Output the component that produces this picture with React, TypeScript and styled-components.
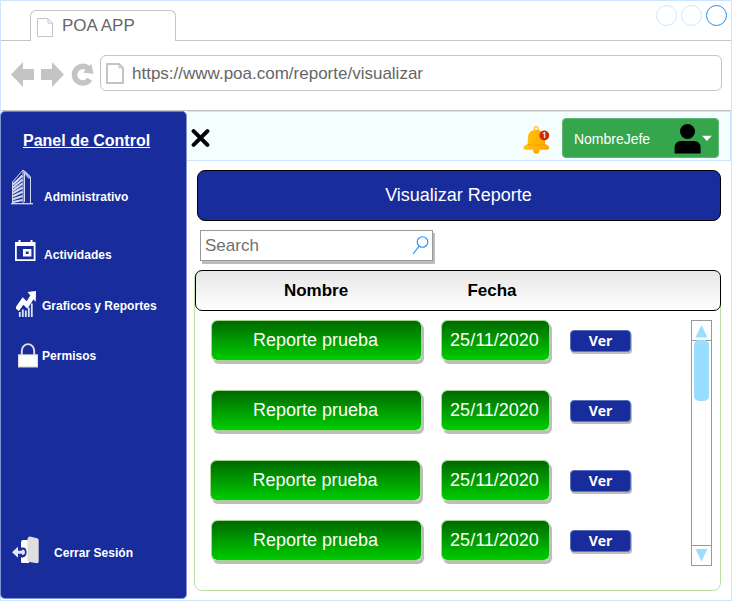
import React from 'react';
import styled, { createGlobalStyle } from 'styled-components';

const GlobalStyle = createGlobalStyle`
  * { box-sizing: border-box; }
  body { margin: 0; background: #fff; font-family: "Liberation Sans", Arial, sans-serif; }
  svg { display: block; flex: none; }
  button { font-family: inherit; margin: 0; }
`;

const navy = '#182c9b';
const paleBlue = '#cce5ff';
const line = '#c4c4c4';

const BrowserWindow = styled.div`
  width: 732px;
  height: 601px;
  border: 1px solid ${paleBlue};
  display: flex;
  flex-direction: column;
  background: #fff;
`;

const TabStrip = styled.div`
  display: flex;
  height: 40px;
  flex: none;
`;

const StripEdge = styled.div`
  width: 29px;
  border-bottom: 1px solid ${line};
`;

const Tab = styled.div`
  width: 146px;
  margin-top: 9px;
  padding: 0 0 0 6px;
  display: flex;
  align-items: center;
  gap: 8px;
  border: 1px solid ${line};
  border-bottom: 0;
  border-radius: 6px 6px 0 0;
  color: #666;
  font-size: 17px;
  line-height: 20px;
  svg { margin-top: 2px; margin-right: 1px; }
`;

const WindowControls = styled.div`
  flex: 1;
  display: flex;
  justify-content: flex-end;
  gap: 4px;
  padding: 4px 4px 0 0;
  border-bottom: 1px solid ${line};
`;

const ControlDot = styled.span<{ $active?: boolean }>`
  width: 21px;
  height: 21px;
  border-radius: 50%;
  border: 1px solid ${p => (p.$active ? '#1890ff' : paleBlue)};
`;

const NavBar = styled.div`
  height: 70px;
  flex: none;
  display: flex;
  align-items: flex-start;
  padding: 14px 9px 0 10px;
  border-bottom: 1px solid ${line};
`;

const NavIcons = styled.div`
  display: flex;
  gap: 7px;
  width: 89px;
  padding-top: 7px;
`;

const AddressBar = styled.div`
  flex: 1;
  height: 36px;
  display: flex;
  align-items: center;
  gap: 8px;
  padding: 0 5px;
  border: 1px solid ${line};
  border-radius: 6px;
  color: #666;
  font-size: 17px;
  span { padding-top: 2px; }
`;

const Content = styled.div`
  flex: 1;
  display: flex;
  min-height: 0;
`;

const Sidebar = styled.nav`
  width: 187px;
  height: 488px;
  margin-left: -1px;
  flex: none;
  display: flex;
  flex-direction: column;
  border: 1px solid #8094d4;
  border-top-color: #6a80c8;
  border-radius: 5px;
  background: ${navy};
  color: #fff;
`;

const SidebarTitle = styled.h1`
  margin: 19px 0 0 22px;
  font-size: 16px;
  line-height: 20px;
  font-weight: bold;
  text-decoration: underline;
`;

const SidebarItem = styled.div<{ $top: number; $left: number; $gap: number; $drop?: number }>`
  display: flex;
  align-items: flex-start;
  margin: ${p => p.$top}px 0 0 ${p => p.$left}px;
  gap: ${p => p.$gap}px;
  font-size: 12px;
  line-height: 14px;
  font-weight: bold;
  letter-spacing: 0.03px;
  span { margin-top: ${p => p.$drop ?? 0}px; }
`;

const Main = styled.main`
  flex: 1;
  display: flex;
  flex-direction: column;
  align-items: flex-start;
`;

const TopBar = styled.header`
  width: 544px;
  height: 50px;
  display: flex;
  align-items: flex-start;
  border: 1px solid ${paleBlue};
  border-left: 0;
  background: #f5feff;
`;

const CloseIcon = styled.div`
  margin: 16px 0 0 4px;
`;

const BellIcon = styled.div`
  margin: 14px 12px 0 auto;
`;

const UserButton = styled.button`
  width: 157px;
  height: 40px;
  margin: 6px 11px 0 0;
  padding: 0 5px 0 11px;
  display: flex;
  align-items: center;
  border: 1px solid #5fb974;
  border-radius: 4px;
  background: #36a64c;
  color: #fff;
  font-size: 14px;
  letter-spacing: -0.02px;
  span { padding-top: 2px; }
  svg { margin-left: auto; margin-top: 2px; }
`;

const TitleBanner = styled.div`
  width: 524px;
  height: 51px;
  margin: 9px 0 0 10px;
  padding-right: 1px;
  border: 1px solid #000;
  border-radius: 8px;
  background: ${navy};
  color: #fff;
  font-size: 18px;
  line-height: 49px;
  text-align: center;
`;

const SearchBox = styled.div`
  width: 233px;
  height: 31px;
  margin: 9px 0 0 13px;
  padding: 0 3px 0 4px;
  display: flex;
  align-items: center;
  justify-content: space-between;
  border: 1px solid #999;
  background: #fff;
  box-shadow: 2px 3px 0 #bdbdbd;
  color: #707070;
  font-size: 17px;
`;

const Panel = styled.section`
  width: 527px;
  height: 321px;
  margin: 9px 0 0 7px;
  border: 1px solid #b9e0a5;
  border-radius: 8px;
  display: flex;
  flex-direction: column;
`;

const TableHead = styled.div`
  height: 41px;
  margin: -1px -1px 0 0;
  flex: none;
  display: flex;
  border: 1px solid #000;
  border-radius: 7px;
  background: linear-gradient(#e6e6e6, #fff);
  font-size: 17px;
  line-height: 39px;
  font-weight: bold;
  color: #000;
`;

const HeadCell = styled.span<{ $width: number; $offset: number }>`
  width: ${p => p.$width}px;
  margin-left: ${p => p.$offset}px;
  text-align: center;
`;

const PanelBody = styled.div`
  display: flex;
  justify-content: space-between;
  padding: 9px 8px 0 16px;
`;

const Rows = styled.div`
  display: flex;
  flex-direction: column;
`;

const Row = styled.div<{ $gap: number }>`
  display: flex;
  align-items: center;
  height: 41px;
  margin-bottom: ${p => p.$gap}px;
`;

const GreenCell = styled.div<{ $width: number; $nudged?: boolean }>`
  width: ${p => p.$width}px;
  height: 41px;
  padding-right: ${p => (p.$nudged ? 1 : 2)}px;
  margin-left: ${p => (p.$nudged ? -1 : 0)}px;
  margin-right: ${p => (p.$nudged ? 20 : 19)}px;
  border: 1px solid #a5d690;
  border-radius: 6px;
  background: linear-gradient(#006a00, #00cc00) padding-box;
  box-shadow: 2px 3px 0 #bdbdbd;
  color: #fff;
  font-size: 18px;
  line-height: 39px;
  text-align: center;
`;

const ViewButton = styled.button`
  width: 61px;
  height: 22px;
  margin: 1px 0 0 1px;
  padding: 0;
  border: 1px solid #5c70bc;
  border-radius: 4px;
  background: ${navy};
  box-shadow: 1px 2px 0 #bdbdbd;
  color: #fff;
  && { font-family: "Open Sans", "Noto Sans", sans-serif; }
  font-size: 14px;
  line-height: 20px;
  font-weight: 700;
  span { display: block; height: 20px; }
`;

const Scrollbar = styled.div`
  width: 21px;
  height: 246px;
  display: flex;
  flex-direction: column;
  border: 1px solid #999;
`;

const ScrollArrow = styled.div<{ $down?: boolean }>`
  height: ${p => (p.$down ? 20 : 19)}px;
  flex: none;
  display: flex;
  justify-content: center;
  padding-top: ${p => (p.$down ? 3 : 4)}px;
  border-top: ${p => (p.$down ? '1px solid #999' : '0')};
`;

const ScrollTrack = styled.div`
  flex: 1;
  border-top: 1px solid #999;
`;

const ScrollThumb = styled.div`
  width: 15px;
  height: 61px;
  margin: -1px auto 0 2px;
  border-radius: 5px;
  background: #99ddff;
`;

const PageIcon = ({ w, h, stroke }: { w: number; h: number; stroke: number }) => (
  <svg width={w} height={h} viewBox={`0 0 ${w} ${h}`} fill="none" stroke="#c4c4c4" strokeWidth={stroke}>
    <path d={`M${stroke / 2} ${stroke / 2}H${w - 5}L${w - stroke / 2} 5V${h - stroke / 2}H${stroke / 2}Z`} />
    <path strokeWidth="1" d={`M${w - 5} 1V5H${w - 1}`} />
  </svg>
);

const ArrowIcon = ({ right }: { right?: boolean }) => (
  <svg width="23" height="25" viewBox="0 0 23 25" fill="#c4c4c4">
    <path d={right ? 'M23 12.5 11 0V7H0V18H11V25Z' : 'M0 12.5 12 0V7H23V18H12V25Z'} />
  </svg>
);

const ReloadIcon = () => (
  <svg width="23" height="25" viewBox="0 0 23 25">
    <path d="M18.8 17.2A8.3 8.3 0 1 1 17 6.2" fill="none" stroke="#c4c4c4" strokeWidth="5.6" />
    <path d="M20.3 1.8 22.6 12 12.2 10.4Z" fill="#c4c4c4" />
  </svg>
);

const BuildingIcon = () => (
  <svg width="22" height="36" viewBox="0 0 22 36" fill="none" stroke="#d3daf0">
    <path strokeWidth="1" d="M1.5 34V13L12 1 19.5 8V34M12 1V34M13.5 4V33" />
    <path strokeWidth="2.1" d="M2 15.5 11.5 6.5M2 18.5 11.5 10.5M2 21.3 11.5 14.5M2 24.2 11.5 18.5M2 27.2 11.5 22.7M2 30.2 11.5 27M2 33 11.5 31" />
    <path strokeWidth="2.8" d="M12.8 2.5 19 9" opacity=".75" />
    <path strokeWidth="1.3" d="M0 34.7H22" />
  </svg>
);

const CalendarIcon = () => (
  <svg width="21" height="21" viewBox="0 0 21 21" fill="#fff">
    <path fillRule="evenodd" d="M0 2H3.5V0H5.5V2H15.5V0H17.5V2H20.5V21H0ZM1.8 6V19.2H18.7V6ZM8 9H16.4V16.4H8ZM10.8 11.5V14H13.6V11.5Z" />
  </svg>
);

const ChartIcon = () => (
  <svg width="20" height="26" viewBox="0 0 20 26">
    <path d="M1 18.5 7 10 11 14 16.5 5.5" fill="none" stroke="#fff" strokeWidth="4.8" />
    <path d="M11.5 1 20 0 19.7 11Z" fill="#fff" />
    <path d="M3.8 26V21M6.8 26V18.5M9.8 26V19.5M12.8 26V16.5M15.8 26V12.5" stroke="#dfe4f5" strokeWidth="1.8" />
  </svg>
);

const LockIcon = () => (
  <svg width="20" height="25" viewBox="0 0 20 25">
    <path d="M3.8 12V8a6.2 6.9 0 0 1 12.4 0V12" fill="none" stroke="#dedede" strokeWidth="1.9" />
    <path d="M0 11.3H20V24.5H0Z" fill="#dedede" />
    <path d="M1.2 12.3H18.8V23.2H1.2Z" fill="#fff" />
  </svg>
);

const ExitIcon = () => (
  <svg width="28" height="28" viewBox="0 0 28 28">
    <path d="M9 6Q9 4 11 4H17V27H10.5Q9 27 9 25.5V21.5H11Q14.6 20.5 14.6 16.3 14.6 11.5 11 11.5H9Z" fill="#fff" />
    <path d="M15.5 3.2Q15.8 .4 18 .6L25.2 2.2Q26.7 2.6 26.7 4V25.5Q26.7 27.2 25 27.2L17.5 26Q15.3 25.5 15.3 24Z" fill="#dedede" />
    <path d="M0 16.2 6 10.7V14.7H10V13.5Q13 13.5 13 16.3T10 19V17.8H6V21.7Z" fill="#e4e6f2" />
  </svg>
);

const CrossIcon = () => (
  <svg width="19" height="20" viewBox="0 0 19 20" stroke="#000" strokeWidth="4" strokeLinecap="round">
    <path d="M2.6 3.2 16.4 16.8M16.4 3.2 2.6 16.8" />
  </svg>
);

const NotificationBell = () => (
  <svg width="27" height="28" viewBox="0 0 27 28">
    <defs>
      <linearGradient id="bell" x1="0" x2="1">
        <stop offset="0" stopColor="#ffc50a" />
        <stop offset="1" stopColor="#ffa400" />
      </linearGradient>
    </defs>
    <circle cx="13.3" cy="2.8" r="2" fill="none" stroke="#ffc83d" strokeWidth="1.5" />
    <circle cx="13.3" cy="24.7" r="3.1" fill="#ffac00" />
    <path d="M4.7 18V13Q4.7 4 13.3 3.8 22 4 22 13V18Q26.2 19.5 26.2 22 26.2 23.8 23 23.8H3.5Q.3 23.8.3 22 .3 20 4.7 18Z" fill="url(#bell)" />
    <path d="M4.5 18.3Q13 20.5 22 18.3" fill="none" stroke="#f29b00" strokeWidth=".8" />
    <circle cx="21.3" cy="9.5" r="4.9" fill="#cc2c0b" />
    <text x="21.2" y="12.4" textAnchor="middle" fontSize="8" fontWeight="600" fontFamily="Open Sans" fill="#fff">1</text>
  </svg>
);

const PersonIcon = () => (
  <svg width="39" height="30" viewBox="0 0 39 30">
    <circle cx="13.5" cy="7.5" r="7.5" />
    <path d="M.6 29.5V23.5Q.6 17.5 7 17H20Q26.6 17.5 26.6 23.5V29.5Z" />
    <path d="M28 11.7H37.8L32.9 17Z" fill="#fff" />
  </svg>
);

const SearchIcon = () => (
  <svg width="17" height="19" viewBox="0 0 17 19" fill="none" stroke="#1890ff" strokeWidth="1.1">
    <circle cx="10.5" cy="6" r="5.3" />
    <path d="M7 10.3 1 18" />
  </svg>
);

const reports = [
  { name: 'Reporte prueba', date: '25/11/2020', gap: 29 },
  { name: 'Reporte prueba', date: '25/11/2020', gap: 29 },
  { name: 'Reporte prueba', date: '25/11/2020', gap: 19, nudged: true },
  { name: 'Reporte prueba', date: '25/11/2020', gap: 0 },
];

export default function App() {
  return (
    <BrowserWindow>
      <GlobalStyle />
      <TabStrip>
        <StripEdge />
        <Tab><PageIcon w={16} h={19} stroke={1} />POA APP</Tab>
        <WindowControls><ControlDot /><ControlDot /><ControlDot $active /></WindowControls>
      </TabStrip>
      <NavBar>
        <NavIcons><ArrowIcon /><ArrowIcon right /><ReloadIcon /></NavIcons>
        <AddressBar><PageIcon w={18} h={21} stroke={2} /><span>https://www.poa.com/reporte/visualizar</span></AddressBar>
      </NavBar>
      <Content>
        <Sidebar>
          <SidebarTitle>Panel de Control</SidebarTitle>
          <SidebarItem $top={18} $left={10} $gap={11} $drop={21}><BuildingIcon /><span>Administrativo</span></SidebarItem>
          <SidebarItem $top={35} $left={14} $gap={8} $drop={8}><CalendarIcon /><span>Actividades</span></SidebarItem>
          <SidebarItem $top={29} $left={15} $gap={6} $drop={8}><ChartIcon /><span>Graficos y Reportes</span></SidebarItem>
          <SidebarItem $top={26} $left={17} $gap={4} $drop={6}><LockIcon /><span>Permisos</span></SidebarItem>
          <SidebarItem $top={168} $left={11} $gap={14} $drop={10}><ExitIcon /><span>Cerrar Sesión</span></SidebarItem>
        </Sidebar>
        <Main>
          <TopBar>
            <CloseIcon><CrossIcon /></CloseIcon>
            <BellIcon><NotificationBell /></BellIcon>
            <UserButton><span>NombreJefe</span><PersonIcon /></UserButton>
          </TopBar>
          <TitleBanner>Visualizar Reporte</TitleBanner>
          <SearchBox>Search<SearchIcon /></SearchBox>
          <Panel>
            <TableHead>
              <HeadCell $width={70} $offset={85}>Nombre</HeadCell>
              <HeadCell $width={60} $offset={111}>Fecha</HeadCell>
            </TableHead>
            <PanelBody>
              <Rows>
                {reports.map((r, i) => (
                  <Row key={i} $gap={r.gap}>
                    <GreenCell $width={211} $nudged={r.nudged}>{r.name}</GreenCell>
                    <GreenCell $width={109}>{r.date}</GreenCell>
                    <ViewButton><span>Ver</span></ViewButton>
                  </Row>
                ))}
              </Rows>
              <Scrollbar>
                <ScrollArrow><svg width="13" height="13"><path d="M6.5 0 12.5 12.5H.5Z" fill="#99ddff" /></svg></ScrollArrow>
                <ScrollTrack><ScrollThumb /></ScrollTrack>
                <ScrollArrow $down><svg width="13" height="13"><path d="M6.5 12.5 12.5 0H.5Z" fill="#99ddff" /></svg></ScrollArrow>
              </Scrollbar>
            </PanelBody>
          </Panel>
        </Main>
      </Content>
    </BrowserWindow>
  );
}
